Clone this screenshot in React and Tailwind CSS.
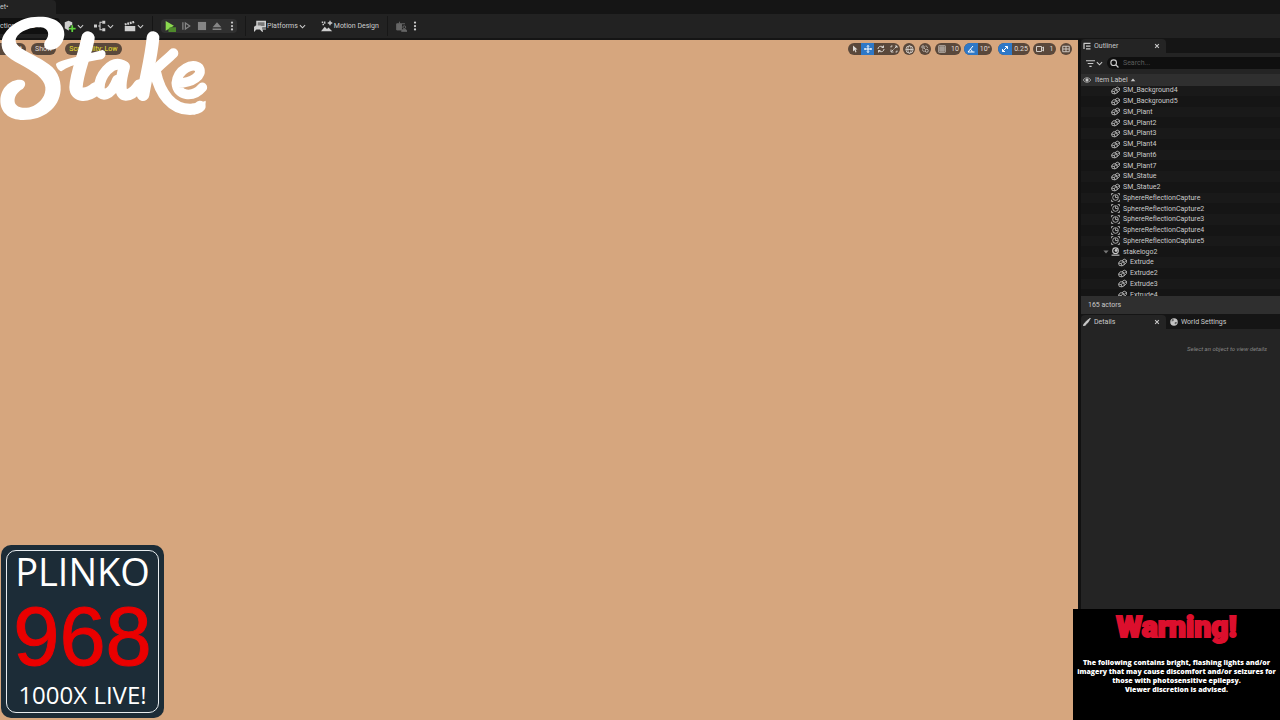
import React from "react";

const PATHS = {
  chevron: <path d="M2 5 8 11 14 5" strokeWidth="2.4" />,
  cube: (
    <>
      <path d="M1 3 6 1l5 2v8l-5 3-5-3z" fill="currentColor" stroke="none" />
      <path d="M11 7v9M6.500 11.500h9" stroke="#171717" strokeWidth="5" />
      <path d="M11 7v9M6.500 11.500h9" stroke="#5fd13f" strokeWidth="2.400" />
    </>
  ),
  blueprint: (
    <>
      <path d="M0 6h4v4H0zM11 1h4v4h-4zM11 11h4v4h-4z" fill="currentColor" stroke="none" />
      <path d="M5.500 8H8M11 3H8v10h3" />
    </>
  ),
  clapper: (
    <>
      <path d="M1 8h14v7H1z" fill="currentColor" stroke="none" />
      <path d="M1 6 14 2.500" strokeWidth="3" strokeDasharray="2.500 1" />
    </>
  ),
  play: (
    <>
      <path d="M1 0v14l12-7z" fill="#8bd94f" stroke="none" />
      <path d="M7 9h9v7H5v-4z" fill="#4f8a2c" stroke="none" />
    </>
  ),
  step: <path d="M3 2v12M7 3v10l7-5z" strokeWidth="2" />,
  stop: <path d="M1.500 1.500h13v13h-13z" fill="currentColor" stroke="none" />,
  eject: <path d="M8 2l7 8H1zM1 12h14v2.500H1z" fill="currentColor" stroke="none" />,
  dots: (
    <g fill="currentColor" stroke="none">
      <circle cx="8" cy="2.500" r="1.800" />
      <circle cx="8" cy="8" r="1.800" />
      <circle cx="8" cy="13.500" r="1.800" />
    </g>
  ),
  platforms: (
    <>
      <path d="M4 2h11v7H4z" fill="currentColor" fillOpacity="0.5" strokeWidth="2" />
      <path d="M0 15c0-5 1-7 3-7h5c2 0 3 2 3 7l-3-3H3zM12 12h4" fill="currentColor" />
    </>
  ),
  motion: (
    <>
      <path d="M0 15l5-6 3 3 2-2 5 5z" fill="currentColor" stroke="none" />
      <path d="M12 1v6M9 4h6M1 3h2M5 2v3M2 6h2" strokeWidth="1.800" />
    </>
  ),
  avatar: (
    <>
      <path d="M1 4h7v9H1zM5 1v3M8 4h5" fill="currentColor" />
      <circle cx="12" cy="9" r="2" />
      <path d="M8 15c0-4 8-4 8 0z" fill="currentColor" />
    </>
  ),
  cursor: <path d="M4 1v12l3-3 2 5 2-1-2-5h4z" fill="currentColor" stroke="none" />,
  move: <path d="M8 1v14M1 8h14M6 3l2-2 2 2M6 13l2 2 2-2M3 6 1 8l2 2M13 6l2 2-2 2" strokeWidth="2" />,
  rotate: <path d="M2 8c0-6 8-7 11-3M14 8c0 6-8 7-11 3M13 1v4H9M3 15v-4h4" strokeWidth="1.900" />,
  scale: <path d="M9 7l5-5M10 2h4v4M7 9l-4 4M2 9v5h5M2 5V2h3M14 11v3h-3" strokeWidth="1.800" />,
  globe: (
    <>
      <circle cx="8" cy="8" r="6.500" />
      <ellipse cx="8" cy="8" rx="3" ry="6.500" />
      <path d="M1.500 8h13" />
    </>
  ),
  snap: (
    <>
      <circle cx="4" cy="4" r="2.500" />
      <circle cx="11.500" cy="11.500" r="3" />
      <path d="M9 2c3 0 4 2 4 4M3 9c0 3 2 4 4 4M6 6l3 3" />
    </>
  ),
  grid: <path d="M1.500 1.500h13v13h-13zM6 1.500v13M10 1.500v13M1.500 6h13M1.500 10h13" />,
  angle: <path d="M12 2 2 14h13M6 9c3 0 4 2 4 5" strokeWidth="2" />,
  diagonal: <path d="M3 13 13 3M8 3h5v5M3 8v5h5" strokeWidth="2" />,
  camera: <path d="M1 3h10v10H1zM11 7l4-3v8l-4-3" strokeWidth="1.800" />,
  layout: <path d="M1.500 2.500h13v11h-13zM8 2.500v11M1.500 8h13" strokeWidth="1.700" />,
  outliner: <path d="M1 2.500h14M6 8h9M6 13.500h9M2 3v11" strokeWidth="2.500" />,
  filter: <path d="M0 3h16M3 8h10M6 13h4" strokeWidth="2" />,
  search: (
    <>
      <circle cx="6.500" cy="6.500" r="5" strokeWidth="2" />
      <path d="M10.500 10.500 15 15" strokeWidth="2.200" />
    </>
  ),
  eye: (
    <>
      <path d="M0.500 8C4 2 12 2 15.500 8 12 14 4 14 .5 8z" />
      <circle cx="8" cy="8" r="2.500" fill="currentColor" />
    </>
  ),
  mesh: (
    <>
      <path d="M1 9l3-4 3 0 4-3 4 2v4l-4 4-4 2-5-1z" />
      <path d="M1 9l5 1 2-3 3 1 4-4M6 10l1 4M11 8v4M7 5l4 2" />
    </>
  ),
  sphere: (
    <>
      <path d="M1 4V1h3M12 1h3v3M15 12v3h-3M4 15H1v-3" />
      <circle cx="8" cy="8" r="5" />
      <path d="M8 4v4h4" />
    </>
  ),
  actor: (
    <>
      <circle cx="8" cy="6.500" r="5" strokeWidth="2" />
      <circle cx="9" cy="6" r="2" fill="currentColor" />
      <path d="M1 14.500h14" strokeWidth="2" />
    </>
  ),
  brush: <path d="M15 0 7 6 4 10l2 2 4-3zM4 10c-3 1-2 4-4 5 3 1 6 0 6-3z" fill="currentColor" />,
  world: (
    <>
      <circle cx="8" cy="8" r="7.500" fill="#c4c4c4" stroke="none" />
      <path d="M4 2l4 1-1 3-4 1zM10 8l4 0-2 5-3-2z" fill="#666" stroke="none" />
    </>
  ),
  close: <path d="M3 3l10 10M13 3 3 13" strokeWidth="2.800" />,
  up: <path d="M8 4l6 7H2z" fill="currentColor" stroke="none" />,
  down: <path d="M8 12l7-8H1z" fill="currentColor" stroke="none" />,
};

function Icon({ name, className = "size-2" }) {
  return (
    <svg
      viewBox="0 0 16 16"
      aria-hidden="true"
      fill="none"
      stroke="currentColor"
      strokeWidth="1.4"
      className={`shrink-0 ${className}`}
    >
      {PATHS[name]}
    </svg>
  );
}

function ToolButton({ icon, label, className = "", iconClass = "size-2.5" }) {
  return (
    <button type="button" aria-label={label} className={`flex items-center justify-center ${className}`}>
      <Icon name={icon} className={iconClass} />
    </button>
  );
}

function MenuButton({ icon, label }) {
  return (
    <button type="button" aria-label={label} className="flex items-center gap-px">
      <Icon name={icon} className="size-3" />
      <Icon name="chevron" className="size-[7px]" />
    </button>
  );
}

function Toolbar() {
  return (
    <div className="flex h-6 items-center bg-[#222222] text-[#cecece]">
      <button type="button" className="flex h-4 w-[60px] items-center gap-px rounded-r bg-[#101010]">
        ction Mode
        <Icon name="chevron" className="size-1.5" />
      </button>
      <div className="ml-1 flex gap-[10px]">
        <MenuButton icon="cube" label="Add actor" />
        <MenuButton icon="blueprint" label="Blueprints" />
        <MenuButton icon="clapper" label="Cinematics" />
      </div>
      <div className="ml-2 h-5 w-px bg-[#151515]" />
      <div className="ml-2 flex h-3.5 w-[76px] items-center justify-between rounded bg-[#303030] pl-1 text-[#858585]">
        <ToolButton icon="play" label="Play" iconClass="size-[11px]" />
        <ToolButton icon="step" label="Step" />
        <ToolButton icon="stop" label="Stop" />
        <ToolButton icon="eject" label="Eject" />
        <ToolButton icon="dots" label="Play options" className="text-[#c8c8c8]" />
      </div>
      <div className="ml-2 h-5 w-px bg-[#171717]" />
      <button type="button" className="ml-2 flex items-center gap-px">
        <Icon name="platforms" className="size-3" />
        Platforms
        <Icon name="chevron" className="size-[7px]" />
      </button>
      <button type="button" className="ml-[15px] flex items-center gap-px">
        <Icon name="motion" className="size-3" />
        Motion Design
      </button>
      <div className="ml-2 h-5 w-px bg-[#171717]" />
      <ToolButton icon="avatar" label="Avatar" className="ml-2 text-[#666666]" iconClass="size-[11px]" />
      <ToolButton icon="dots" label="More" className="ml-[3px]" />
    </div>
  );
}

function Pill({ className = "", children }) {
  return (
    <div className={`flex h-3 items-center overflow-hidden rounded-full bg-[#5a483b] ${className}`}>
      {children}
    </div>
  );
}

function Snap({ icon, label, value, active, className }) {
  return (
    <Pill className={className}>
      <ToolButton
        icon={icon}
        label={label}
        iconClass="size-2"
        className={active ? "h-3 w-3.5 bg-[#2e78c7] text-white" : "h-3 w-3.5"}
      />
      <button type="button" className="flex-1 text-center">
        {value}
      </button>
    </Pill>
  );
}

function Viewport() {
  return (
    <main className="min-w-0 flex-1 bg-[#d6a67e] pt-[3px]">
      <div className="flex h-3 items-center justify-between pr-1.5 text-[#e0dbd6]">
        <div className="flex gap-[5px]">
          <button type="button" className="h-3 w-[26px] rounded-r-full bg-[#5a483b] pl-1">Unlit</button>
          <button type="button" className="h-3 rounded-full bg-[#5a483b] px-1">Show</button>
          <button type="button" className="ml-1 h-3 rounded-full bg-[#5a483b] px-1 text-[#ece12f]">
            Scalability: Low
          </button>
        </div>
        <div className="flex">
          <Pill className="mr-[3px]">
            <ToolButton icon="cursor" label="Select" className="h-3 w-[13px]" iconClass="size-2" />
            <ToolButton icon="move" label="Move" className="h-3 w-[13px] bg-[#2e78c7] text-white" iconClass="size-2" />
            <ToolButton icon="rotate" label="Rotate" className="h-3 w-[13px]" iconClass="size-2" />
            <ToolButton icon="scale" label="Scale" className="h-3 w-[13px]" iconClass="size-2" />
          </Pill>
          <Pill className="mr-1">
            <ToolButton icon="globe" label="World space" className="h-3 w-3" iconClass="size-[9px]" />
          </Pill>
          <Pill className="mr-1">
            <ToolButton icon="snap" label="Surface snapping" className="h-3 w-3" iconClass="size-2" />
          </Pill>
          <Snap icon="grid" label="Grid snap" value="10" className="mr-[3px] w-[26px]" />
          <Snap icon="angle" label="Angle snap" value="10°" active className="mr-1.5 w-7" />
          <Snap icon="diagonal" label="Scale snap" value="0.25" active className="mr-[3px] w-8" />
          <Snap icon="camera" label="Camera speed" value="1" className="mr-1 w-[23px]" />
          <Pill>
            <ToolButton icon="layout" label="Layout" className="h-3 w-3" iconClass="size-2" />
          </Pill>
        </div>
      </div>
    </main>
  );
}

const ACTORS = [
  ...["SM_Background4", "SM_Background5", "SM_Plant", "SM_Plant2", "SM_Plant3", "SM_Plant4", "SM_Plant6", "SM_Plant7", "SM_Statue", "SM_Statue2"].map(
    (name) => ({ name, icon: "mesh" })
  ),
  ...["", "2", "3", "4", "5"].map((n) => ({ name: `SphereReflectionCapture${n}`, icon: "sphere" })),
  { name: "stakelogo2", icon: "actor", open: true },
  ...["", "2", "3", "4"].map((n) => ({ name: `Extrude${n}`, icon: "mesh", child: true })),
];

function PanelTab({ icon, label, active }) {
  return (
    <div className={`flex items-center ${active ? "w-[85px] rounded-t bg-[#242424] px-0.5" : "px-1"}`}>
      <button type="button" className="flex h-3.5 flex-1 items-center gap-[3px]">
        <Icon name={icon} />
        {label}
      </button>
      {active && (
        <button type="button" aria-label={`Close ${label}`} className="mr-1">
          <Icon name="close" className="size-1.5" />
        </button>
      )}
    </div>
  );
}

function SidePanel() {
  return (
    <aside className="flex w-[202px] shrink-0 flex-col border-l-3 border-[#111111] bg-[#151515] text-[#cacaca]">
      <PanelTab icon="outliner" label="Outliner" active />
      <div className="flex h-[21px] items-center gap-1 bg-[#242424] pb-px pl-[5px]">
        <button type="button" aria-label="Filter" className="flex items-center gap-px">
          <Icon name="filter" className="size-[9px]" />
          <Icon name="chevron" className="size-[7px]" />
        </button>
        <label className="flex h-3 flex-1 items-center gap-1 rounded-l-full bg-[#0f0f0f] pl-[3px]">
          <Icon name="search" className="size-[9px]" />
          <input
            type="text"
            aria-label="Search"
            placeholder="Search..."
            className="w-full bg-transparent outline-none placeholder:text-[#5c5c5c]"
          />
        </label>
      </div>
      <button type="button" className="flex h-3 items-center bg-[#2f2f2f] pl-0.5">
        <Icon name="eye" />
        <span className="mr-0.5 ml-1">Item Label</span>
        <Icon name="up" className="size-1.5" />
      </button>
      <div className="flex h-[210px] items-start overflow-hidden">
        <ul className="-mt-px flex h-[215px] flex-1 flex-col">
          {ACTORS.map((a) => (
            <li
              key={a.name}
              className={`flex flex-1 items-center gap-[3px] odd:bg-[#191919] ${a.child ? "pl-[37px]" : a.open ? "pl-[22px]" : "pl-[30px]"}`}
            >
              {a.open && <Icon name="down" className="-mr-px size-1.5 text-[#777777]" />}
              <Icon name={a.icon} className="size-[9px]" />
              {a.name}
            </li>
          ))}
        </ul>
      </div>
      <div className="flex h-[18px] items-center bg-[#2f2f2f] pl-[7px]">165 actors</div>
      <div className="mt-px flex">
        <PanelTab icon="brush" label="Details" active />
        <PanelTab icon="world" label="World Settings" />
      </div>
      <div className="flex-1 bg-[#242424] pt-4 pr-[13px] text-right text-[6px] leading-2 text-[#858585] italic">
        Select an object to view details
      </div>
    </aside>
  );
}

function StakeLogo() {
  return (
    <svg viewBox="0 0 660 390" role="img" aria-label="Stake" className="absolute top-0 left-0 w-[220px] text-white">
      <path
        fill="currentColor"
        d="M5 125C8 92 55 50 115 50c50-2 80 22 78 55-3 30-25 47-45 44-14-2-20-14-12-27 14-14 12-38-14-40-37-2-74 18-75 40 1 23 48 36 88 63 35 20 49 50 47 85-4 55-52 90-112 90C25 360 0 335 1 300c1-35 29-62 59-61 18 1 20 16 8 28-16 8-26 23-24 39 4 19 34 22 56 12 25-13 38-33 36-56-3-27-36-47-76-69C20 172 2 155 5 125Z"
      />
      <path
        fill="currentColor"
        d="M168 192c5-8 40-16 70-24l70-18c14 4 10 24-3 28-35 7-87 12-121 36-8-2-16-14-16-22Z"
      />
      <g fill="none" stroke="currentColor" strokeLinecap="round" strokeLinejoin="round">
        <path strokeWidth="40" d="M264 114c-9 52-34 102-36 148 0 26 32 28 60 4" />
        <path strokeWidth="32" d="M368 196C332 180 299 230 298 262c0 34 36 26 54-22" />
        <path strokeWidth="34" d="M373 200C363 236 354 283 378 285c16 0 28-12 40-30" />
        <path strokeWidth="38" d="M459 113c-5 58-20 112-30 171" />
        <path strokeWidth="30" d="M520 160c-22 22-46 38-58 56" />
        <path strokeWidth="34" d="M466 216c14 66 50 112 104 112 17 0 26-4 30-9" />
        <path strokeWidth="29" d="M534 249c44 0 76-24 63-45-18-18-64 4-68 45 2 40 50 46 78 13" />
      </g>
      <path fill="currentColor" d="M575 311c20-1 32-5 42-9 2 16-10 36-36 42z" />
    </svg>
  );
}

function PlinkoCard() {
  return (
    <section className="absolute bottom-0.5 left-px w-[163px] rounded-[10px] bg-[#1c2c37] p-[5px] text-center whitespace-nowrap">
      <div className="flex h-[163px] flex-col items-center rounded-[10px] border border-[#e8edf0] text-white">
        <h2 className="font-['Open_Sans',sans-serif] text-[38px] leading-10 font-medium">PLINKO</h2>
        <p className="mt-1 font-['Liberation_Sans',Arial,sans-serif] text-[83px] leading-[84px] text-[#ea0000] [-webkit-text-stroke:1px_#ea0000]">
          968
        </p>
        <p className="mt-0.5 font-['Open_Sans',sans-serif] text-2xl leading-7 font-medium">1000X LIVE!</p>
      </div>
    </section>
  );
}

function WarningCard() {
  return (
    <section className="absolute right-0 bottom-0 h-[111px] w-[207px] bg-black text-center whitespace-nowrap">
      <h2 className="pt-0.5 font-[Roboto,sans-serif] text-[30px] leading-8 font-black text-[#dc0f2d] [-webkit-text-stroke:2px_#dc0f2d]">
        Warning!
      </h2>
      <p className="mt-[15px] flex flex-col items-center font-['Open_Sans',sans-serif] text-[7px] leading-[9px] font-extrabold text-white">
        <span>The following contains bright, flashing lights and/or</span>
        <span>imagery that may cause discomfort and/or seizures for</span>
        <span>those with photosensitive epilepsy.</span>
        <span>Viewer discretion is advised.</span>
      </p>
    </section>
  );
}

export default function App() {
  return (
    <div className="relative flex min-h-screen flex-col overflow-hidden bg-[#151515] font-[Roboto,sans-serif] text-[7px] leading-[10px] whitespace-nowrap">
      <header className="pb-px">
        <div className="flex h-3.5 bg-[#151515] text-[#c8c8c8]">
          <div className="w-14 rounded-tr bg-[#222222] pt-0.5">et•</div>
        </div>
        <Toolbar />
      </header>
      <div className="flex flex-1">
        <div className="flex min-w-0 flex-1 pt-px">
          <Viewport />
        </div>
        <SidePanel />
      </div>
      <StakeLogo />
      <PlinkoCard />
      <WarningCard />
    </div>
  );
}
